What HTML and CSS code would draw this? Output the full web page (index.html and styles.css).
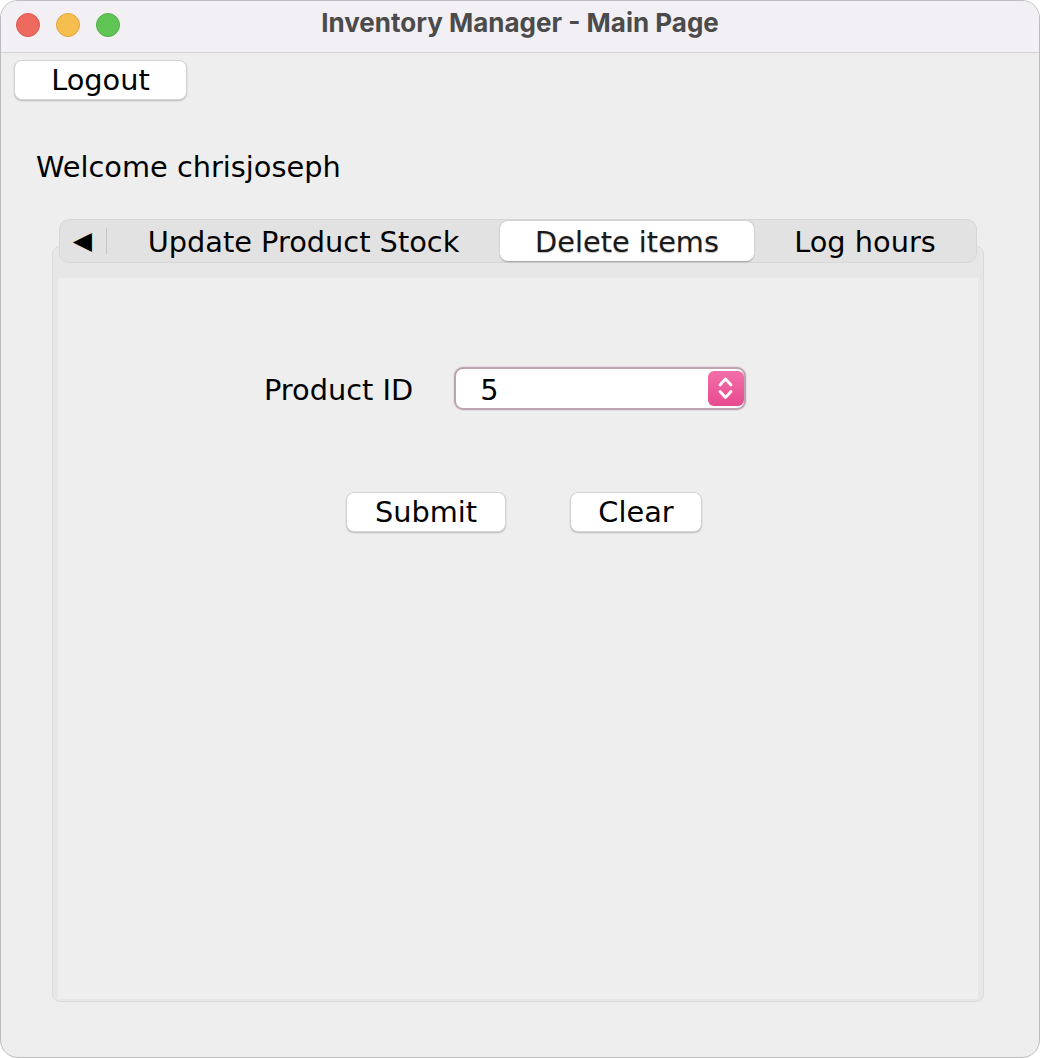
FILE: index.html
```html
<!DOCTYPE html>
<html>
<head>
<meta charset="utf-8">
<link rel="stylesheet" href="styles.css">
<title>Inventory Manager - Main Page</title>
</head>
<body>
<div class="window">
  <div class="titlebar">
    <div class="lights">
      <span class="light red"></span>
      <span class="light yellow"></span>
      <span class="light green"></span>
    </div>
    <div class="title">Inventory Manager - Main Page</div>
    <div></div>
  </div>
  <div class="content">
    <button class="btn logout">Logout</button>
    <div class="welcome">Welcome chrisjoseph</div>
    <div class="tabs">
      <div class="tabbar">
        <div class="tab-arrow"><span class="arrow">◀</span><span class="sep"></span></div>
        <div class="tab tab-update">Update Product Stock</div>
        <div class="tab tab-selected">Delete items</div>
        <div class="tab tab-log">Log hours</div>
      </div>
      <div class="panel">
        <div class="panel-inner">
          <div class="form-row">
            <span class="label">Product ID</span>
            <div class="combo">
              <span class="combo-value">5</span>
              <span class="combo-btn">
                <svg width="36" height="35" viewBox="0 0 36 35">
                  <path d="M12 14 L17.5 8 L23 14" fill="none" stroke="#fff" stroke-width="2.8" stroke-linecap="round" stroke-linejoin="round"/>
                  <path d="M12 20.5 L17.5 26.5 L23 20.5" fill="none" stroke="#fff" stroke-width="2.8" stroke-linecap="round" stroke-linejoin="round"/>
                </svg>
              </span>
            </div>
          </div>
          <div class="button-row">
            <button class="btn submit">Submit</button>
            <button class="btn clear">Clear</button>
          </div>
        </div>
      </div>
    </div>
  </div>
</div>
</body>
</html>
```
FILE: styles.css
```css
html, body {
  margin: 0;
  padding: 0;
  background: #ffffff;
}
body {
  font-family: "DejaVu Sans", "Liberation Sans", sans-serif;
  color: #000;
}
.window {
  width: 1040px;
  height: 1058px;
  box-sizing: border-box;
  border: 1px solid #bcbcbc;
  border-radius: 18px;
  overflow: hidden;
  background: #eeeeee;
}
.titlebar {
  height: 51px;
  border-bottom: 1px solid #d2d2d2;
  background: #f2f0f5;
  display: grid;
  grid-template-columns: 1fr auto 1fr;
  align-items: center;
}
.lights {
  display: flex;
  gap: 16px;
  padding-left: 15px;
  margin-top: -4px;
}
.light {
  width: 24px;
  height: 24px;
  border-radius: 50%;
  box-sizing: border-box;
}
.red { background: #ee6a5f; border: 1px solid #d9584e; }
.yellow { background: #f6be4f; border: 1px solid #dea63c; }
.green { background: #61c555; border: 1px solid #4fae44; }
.title {
  font-family: "Inter", "Liberation Sans", sans-serif;
  font-weight: 700;
  font-size: 26px;
  color: #4b4b4b;
  margin-top: -9px;
}
.content {
  padding-top: 7px;
}
.btn {
  font-family: "DejaVu Sans", sans-serif;
  font-size: 28.8px;
  color: #000;
  background: #ffffff;
  border: 1px solid #d4d4d4;
  border-radius: 8px;
  box-shadow: 0 1px 1.5px rgba(0,0,0,0.22);
  padding: 0;
  height: 40px;
  line-height: 38px;
  display: block;
}
.logout {
  margin-left: 13px;
  width: 173px;
}
.welcome {
  margin-left: 35px;
  margin-top: 48px;
  font-size: 28.8px;
  line-height: 38px;
}
.tabs {
  margin-top: 33px;
  margin-left: 51px;
  width: 932px;
}
.tabbar {
  position: relative;
  z-index: 1;
  margin: 0 7px;
  height: 44px;
  box-sizing: border-box;
  border: 1px solid #d7d7d7;
  border-radius: 10px;
  background: #e2e2e2;
  display: flex;
  align-items: center;
}
.tab-arrow {
  width: 47px;
  height: 100%;
  display: flex;
  align-items: center;
  justify-content: flex-end;
}
.arrow {
  font-size: 25px;
  line-height: 30px;
  color: #000;
  margin-right: 14px;
}
.sep {
  width: 1px;
  height: 26px;
  background: #c6c6c6;
}
.tab {
  font-size: 28.8px;
  text-align: center;
  height: 40px;
  line-height: 43px;
}
.tab-update { width: 393px; }
.tab-selected {
  width: 254px;
  background: #ffffff;
  border-radius: 8px;
  box-shadow: 0 0.5px 1.5px rgba(0,0,0,0.3);
  color: #1a1a1a;
  text-shadow: 0 1px 1px rgba(0,0,0,0.25);
}
.tab-log { flex: 1; }
.panel {
  margin-top: -17px;
  height: 756px;
  box-sizing: border-box;
  border: 1px solid #dadada;
  border-radius: 8px;
  background: #e7e7e7;
  padding: 31px 5px 2px 5px;
}
.panel-inner {
  height: 100%;
  background: #eeeeee;
  padding-top: 89px;
  box-sizing: border-box;
}
.form-row {
  display: flex;
  align-items: center;
  padding-left: 206px;
  gap: 41px;
}
.label {
  font-size: 28.8px;
  line-height: 38px;
  padding-top: 2px;
}
.combo {
  width: 292px;
  height: 43px;
  box-sizing: border-box;
  border: 2px solid #bba5b1;
  border-radius: 9px;
  background: #ffffff;
  box-shadow: 0 0 0 1px #e4dde1;
  display: flex;
  align-items: center;
  justify-content: space-between;
  padding: 0 0 0 24px;
}
.combo-value {
  font-size: 28.8px;
  line-height: 38px;
  padding-top: 2px;
}
.combo-btn {
  width: 36px;
  height: 35px;
  border-radius: 6px;
  background: linear-gradient(#f26fa9, #e84a8f);
  display: flex;
}
.button-row {
  display: flex;
  gap: 64px;
  padding-left: 288px;
  margin-top: 82px;
}
.submit { width: 160px; }
.clear { width: 132px; }
```
